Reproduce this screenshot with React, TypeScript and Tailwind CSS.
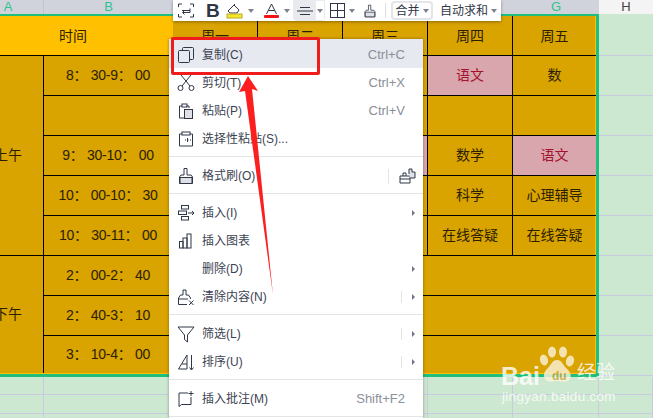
import type { ReactNode } from 'react';

const cjk = "font-['Liberation_Sans','Noto_Sans_CJK_SC',sans-serif]";

const line = { fill: 'none', stroke: '#2f3646', strokeWidth: 1 };

// menu icons, 18x18 box
const icons: Record<string, ReactNode> = {
  copy: (
    <g {...line}>
      <rect x="5.5" y="1.5" width="11" height="12" rx="1" />
      <rect x="1.5" y="4.5" width="11" height="12" rx="1" fill="#e6e9ef" />
    </g>
  ),
  cut: (
    <g {...line}>
      <circle cx="3.5" cy="14" r="2.5" />
      <circle cx="14.5" cy="14" r="2.5" />
      <path d="M5 12 14 1M13 12 4 1" />
    </g>
  ),
  paste: (
    <g {...line}>
      <path d="M5 4H2.5v12H7M12 6V4H9.5" />
      <rect x="5" y="2" width="5" height="3" />
      <rect x="7.5" y="7.5" width="8" height="9" fill="#dfe1e6" />
    </g>
  ),
  special: (
    <g {...line}>
      <path d="M5 4H2.5v12h13V4H13" />
      <rect x="5" y="2" width="8" height="3" />
      <path d="M8 10h1M10.5 10h1M13 10h1M10.5 8v4" />
    </g>
  ),
  brush: (
    <g {...line}>
      <path d="M7 1.5h3V8h4l1.500 2v6.500h-13V10L4 8h3z" />
      <path d="M3 10.500h12v6H3z" fill="#dfe1e6" />
    </g>
  ),
  insert: (
    <g {...line}>
      <rect x="4.500" y="1.500" width="7" height="3.500" />
      <rect x="1.500" y="7" width="8" height="3.500" />
      <rect x="4.500" y="12.500" width="7" height="3.500" />
      <path d="M11 9h6M15 7l2 2-2 2" />
    </g>
  ),
  chart: (
    <g {...line}>
      <rect x="2.500" y="9.500" width="3.500" height="6.500" />
      <rect x="6" y="6" width="4" height="10" />
      <rect x="10" y="2" width="4" height="14" />
    </g>
  ),
  clear: (
    <g {...line}>
      <path d="M6 2h3v5h2.500l2 3v1M6 2v5H3.500l-2 3v6.500H10M1.500 11H11" />
      <path d="M12 12.500l4.500 4.500M16.500 12.500 12 17" />
    </g>
  ),
  filter: <path {...line} d="M1 2h16l-6.500 8v7l-3-2.500V10z" />,
  sort: (
    <g {...line}>
      <path d="M1.500 16 10 2v14zM5 11h5M14.500 2v14.500M12.500 14.500l2 2.500 2-2.500" />
    </g>
  ),
  note: <path {...line} d="M11 3H2v13.500l2.500-2H14V7M14 1v5M11.500 3.500h5" />,
};

type Row =
  | { sep: true }
  | { label: string; icon?: string; keys?: string; caret?: boolean; divider?: boolean; active?: boolean; painter?: boolean };

const menu: Row[] = [
  { label: '复制(C)', icon: 'copy', keys: 'Ctrl+C', active: true },
  { label: '剪切(T)', icon: 'cut', keys: 'Ctrl+X' },
  { label: '粘贴(P)', icon: 'paste', keys: 'Ctrl+V' },
  { label: '选择性粘贴(S)...', icon: 'special' },
  { sep: true },
  { label: '格式刷(O)', icon: 'brush', painter: true },
  { sep: true },
  { label: '插入(I)', icon: 'insert', caret: true },
  { label: '插入图表', icon: 'chart' },
  { label: '删除(D)', caret: true },
  { label: '清除内容(N)', icon: 'clear', caret: true, divider: true },
  { sep: true },
  { label: '筛选(L)', icon: 'filter', caret: true, divider: true },
  { label: '排序(U)', icon: 'sort', caret: true, divider: true },
  { sep: true },
  { label: '插入批注(M)', icon: 'note', keys: 'Shift+F2' },
  { sep: true },
];

const times = ['8：30-9：00', '', '9：30-10：00', '10：00-10：30', '10：30-11：00', '2：00-2：40', '2：40-3：10', '3：10-4：00'];
const thu = ['语文', '', '数学', '科学', '在线答疑'];
const fri = ['数', '', '语文', '心理辅导', '在线答疑'];

function Caret() {
  return <span className="w-0 h-0 border-x-[3px] border-x-transparent border-t-[4px] border-t-[#7d838e]" />;
}

function Sheet() {
  return (
    <div className="flex -ml-[27px] w-[680px]">
      <div className="w-[626px] shrink-0 border-t-2 border-r-[3px] border-b-[3px] border-[#1fbe7c]">
        <div className="grid grid-cols-[71px_129px_85px_85px_85px_85px_83px] grid-rows-[40px_repeat(7,40px)_37px] bg-[#d9a300] text-[14px] text-[#2b2100] text-center border-r border-b border-[#ffc000]">
          <div className="col-span-2 bg-[#ffc000] border-b border-black flex items-center justify-center pt-px">时间</div>
          {['周一', '周二', '周三', '周四', '周五'].map((d, i) => (
            <div key={d} className={`flex items-center justify-center pt-px border-b border-black ${i < 4 ? 'border-r' : ''}`}>{d}</div>
          ))}
          <div className="row-span-5 border-r border-b border-black flex items-center justify-center">上午</div>
          <TimeRows from={0} to={5} />
          <div className="row-span-3 border-r border-black flex items-center justify-center">下午</div>
          <TimeRows from={5} to={8} />
        </div>
      </div>
      <div className="flex-1 flex flex-col pt-[2px]">
        {[39, 40, 40, 40, 40, 40, 40, 40, 40].map((h, i) => (
          <div key={i} className="border-b border-[#c8cbe0]" style={{ height: h + (i === 0 ? 1 : 0) }} />
        ))}
      </div>
    </div>
  );
}

function TimeRows({ from, to }: { from: number; to: number }) {
  return (
    <>
      {times.slice(from, to).map((t, n) => {
        const i = from + n;
        const last = i === 7;
        const b = last ? '' : 'border-b border-black';
        return (
          <div key={i} className="contents">
            <div className={`flex items-center justify-center tracking-[-0.3px] border-r border-black ${b}`}>{t.replace(/：/g, '： ')}</div>
            <div className={`${i < 5 ? 'border-r border-black' : ''} ${b}`} />
            <div className={`${i < 5 ? 'border-r border-black' : ''} ${b}`} />
            <div className={`${i < 5 ? 'border-r border-black' : ''} ${b} ${i === 2 ? 'bg-[#d9a6ad]' : ''}`} />
            <div className={`flex items-center justify-center ${b} ${i < 5 ? 'border-r border-black' : ''} ${i === 0 ? 'bg-[#d9a6ad] text-[#a3122f]' : ''}`}>
              {thu[i]}
            </div>
            <div className={`flex items-center justify-center ${b} ${i === 2 ? 'bg-[#d9a6ad] text-[#a3122f]' : ''}`}>{fri[i]}</div>
          </div>
        );
      })}
    </>
  );
}

function Toolbar() {
  return (
    <div className="absolute left-[173px] top-0 w-[328px] h-[21px] bg-white shadow-[0_1px_3px_rgba(0,0,0,0.35)] flex items-center text-[12px] text-[#2f3646]">
      <svg className="ml-[5px] shrink-0" width="16" height="15" viewBox="0 0 16 15" fill="none" stroke="#2f3646">
        <path d="M4 1H.5v3M12 1h3.500v3M.5 11v3H4M15.500 11v3H12M4 7.500h8M12 5.500v4H5M6.500 7.500 4.500 9.500l2 2" />
      </svg>
      <span className="ml-[12px] w-[11px] font-['Liberation_Sans',sans-serif] font-bold text-[19px] leading-none">B</span>
      <svg className="ml-[9px] shrink-0" width="18" height="16" viewBox="0 0 18 16" fill="none" stroke="#2f3646">
        <path d="M2 8 8 2l5 5-2 3H4zM8 2l1-1" />
        <rect x="1" y="11" width="15" height="4" fill="#f5e626" stroke="#b9ae2a" />
      </svg>
      <span className="ml-[4px] flex"><Caret /></span>
      <svg className="ml-[10px] shrink-0" width="15" height="16" viewBox="0 0 15 16">
        <path d="M2.500 11 7.500 1l5 10M4.500 7.500h6" fill="none" stroke="#2f3646" />
        <rect x="0" y="12" width="15" height="3" rx="1" fill="#f01414" />
      </svg>
      <span className="ml-[5px] flex"><Caret /></span>
      <div className="ml-[3px] w-[32px] h-[21px] bg-[#e8eaee] rounded-b-sm flex items-center shrink-0">
        <svg className="ml-[4px]" width="16" height="10" viewBox="0 0 16 10" fill="none" stroke="#2f3646">
          <path d="M3 1.500h10M0 5h16M3 8.500h10" />
        </svg>
        <span className="ml-[3px] w-[8px] h-[19px] bg-white flex items-center justify-center"><Caret /></span>
      </div>
      <svg className="ml-[5px] shrink-0" width="15" height="15" viewBox="0 0 15 15" fill="none" stroke="#2f3646">
        <rect x=".5" y=".5" width="14" height="14" />
        <path d="M7.500 0v15M0 7.500h15" />
      </svg>
      <span className="ml-[4px] flex"><Caret /></span>
      <svg className="ml-[8px] shrink-0" width="14" height="16" viewBox="0 0 18 18">
        {icons.brush}
      </svg>
      <span className="ml-[8px] w-px h-[15px] bg-[#dcdee3]" />
      <div className={`ml-[5px] w-[42px] h-[19px] border-2 border-[#e3e5ea] rounded-sm flex items-center justify-center gap-[3px] shrink-0 ${cjk}`}>
        合并<Caret />
      </div>
      <div className={`ml-[7px] flex items-center gap-[3px] whitespace-nowrap ${cjk}`}>
        自动求和<Caret />
      </div>
    </div>
  );
}

function ContextMenu() {
  return (
    <div className={`absolute left-[169px] top-[39px] w-[254px] bg-white shadow-[0_0_3px_rgba(0,0,0,0.35)] text-[12px] text-[#3c4352] ${cjk}`}>
      {menu.map((r, i) =>
        'sep' in r ? (
          <div key={i} className="h-[9px] pt-[4px]">
            <div className="h-px bg-[#e3e4e6]" />
          </div>
        ) : (
          <div key={i} className={`flex items-center pl-[8px] pt-[2px] ${r.active ? 'h-[29px] bg-[#e6e9ef]' : 'h-[28px]'}`}>
            <span className="w-[18px] h-[18px] shrink-0">
              {r.icon && (
                <svg width="18" height="18" viewBox="0 0 18 18">
                  {icons[r.icon]}
                </svg>
              )}
            </span>
            <span className="ml-[7px] flex-1">{r.label}</span>
            {r.keys && <span className="mr-[18px] text-[13px] text-[#8a8f99] font-['Liberation_Sans',sans-serif]">{r.keys}</span>}
            {r.painter && (
              <>
                <span className="w-px h-[15px] bg-[#e3e4e6]" />
                <svg className="ml-[10px] mr-[6px]" width="18" height="18" viewBox="0 0 18 18" fill="none" stroke="#2f3646">
                  <path d="M1 9h10v7H1zM1 12h10M4 9V6h3v3" />
                  <path d="M10 7V2h3v3h3v6h-5" fill="#dfe1e6" />
                </svg>
              </>
            )}
            {r.divider && <span className="w-px h-[12px] bg-[#e3e4e6]" />}
            {r.caret && (
              <span className="ml-[10px] mr-[8px] w-0 h-0 border-y-[3px] border-y-transparent border-l-[3px] border-l-[#6f7786]" />
            )}
          </div>
        ),
      )}
    </div>
  );
}

function Watermark() {
  return (
    <div className="absolute left-[500px] top-[345px] w-[150px] h-[66px] opacity-80 pointer-events-none">
      <svg className="absolute left-[39px] top-[1px]" width="36" height="38" viewBox="0 0 36 38" fill="#fbf3dc">
        <ellipse cx="5" cy="14" rx="4" ry="5.500" transform="rotate(-15 5 14)" />
        <ellipse cx="13" cy="6" rx="4" ry="5.500" />
        <ellipse cx="24" cy="6" rx="4" ry="5.500" />
        <ellipse cx="31" cy="15" rx="4" ry="5.500" transform="rotate(15 31 15)" />
        <path d="M18 14c-5 0-6 5-9 8-5 4-5 9-2 12 3 3 7 1 11 1s9 2 12-1c3-3 2-8-3-12-3-3-4-8-9-8z" />
      </svg>
      <div className="absolute left-[1px] top-[19px] font-['Liberation_Sans',sans-serif] font-bold text-[25px] leading-none text-white">
        Bai
      </div>
      <div className="absolute left-[52px] top-[25px] font-['Liberation_Sans',sans-serif] font-bold text-[12px] leading-none text-[#c9a640]">du</div>
      <div className={`absolute left-[77px] top-[18px] text-[19px] leading-none whitespace-nowrap text-white ${cjk}`}>经验</div>
      <div className="absolute left-[2px] top-[45px] font-['Liberation_Sans',sans-serif] text-[13.5px] leading-none tracking-[0.3px] whitespace-nowrap text-white">
        jingyan.baidu.com
      </div>
    </div>
  );
}

export default function App() {
  return (
    <div className={`relative w-[653px] h-[418px] overflow-hidden bg-[#cde8d1] ${cjk}`}>
      {/* column letters */}
      <div className="flex h-[14px] -ml-[27px] w-[680px] bg-[#d0d3dc] text-[13px] leading-[14px] text-center text-[#2fc28e] font-['Liberation_Sans',sans-serif]">
        <div className="w-[71px] border-r border-[#c2c5cf]">A</div>
        <div className="w-[129px]">B</div>
        <div className="w-[85px]" />
        <div className="w-[85px]" />
        <div className="w-[85px]" />
        <div className="w-[85px]" />
        <div className="w-[86px]">G</div>
        <div className="flex-1 bg-[#f4f4f4] text-[#444]">H</div>
      </div>

      <Sheet />

      {/* empty rows under the table */}
      <div className="flex -ml-[27px] w-[680px] h-[41px]">
        {[71, 129, 85, 85, 85, 85, 86, 54].map((w, i) => (
          <div key={i} className="shrink-0" style={{ width: w }}>
            <div className="h-[18px] border-r border-b border-[#c8cbe0]" />
            <div className="h-[19px] border-r border-b border-[#c8cbe0]" />
            <div className="h-[4px] border-r border-[#c8cbe0]" />
          </div>
        ))}
      </div>

      <Toolbar />
      <ContextMenu />

      {/* red annotation */}
      <div className="absolute left-[171px] top-[37px] w-[149px] h-[38px] border-[3px] border-[#f01c1c] rounded-[2px]" />
      <svg className="absolute left-0 top-0 pointer-events-none" width="653" height="418" viewBox="0 0 653 418">
        <path d="M248 76 258 91 252 89 273 295 245 91 239 92Z" fill="#fb1f1f" />
      </svg>

      <Watermark />
    </div>
  );
}
